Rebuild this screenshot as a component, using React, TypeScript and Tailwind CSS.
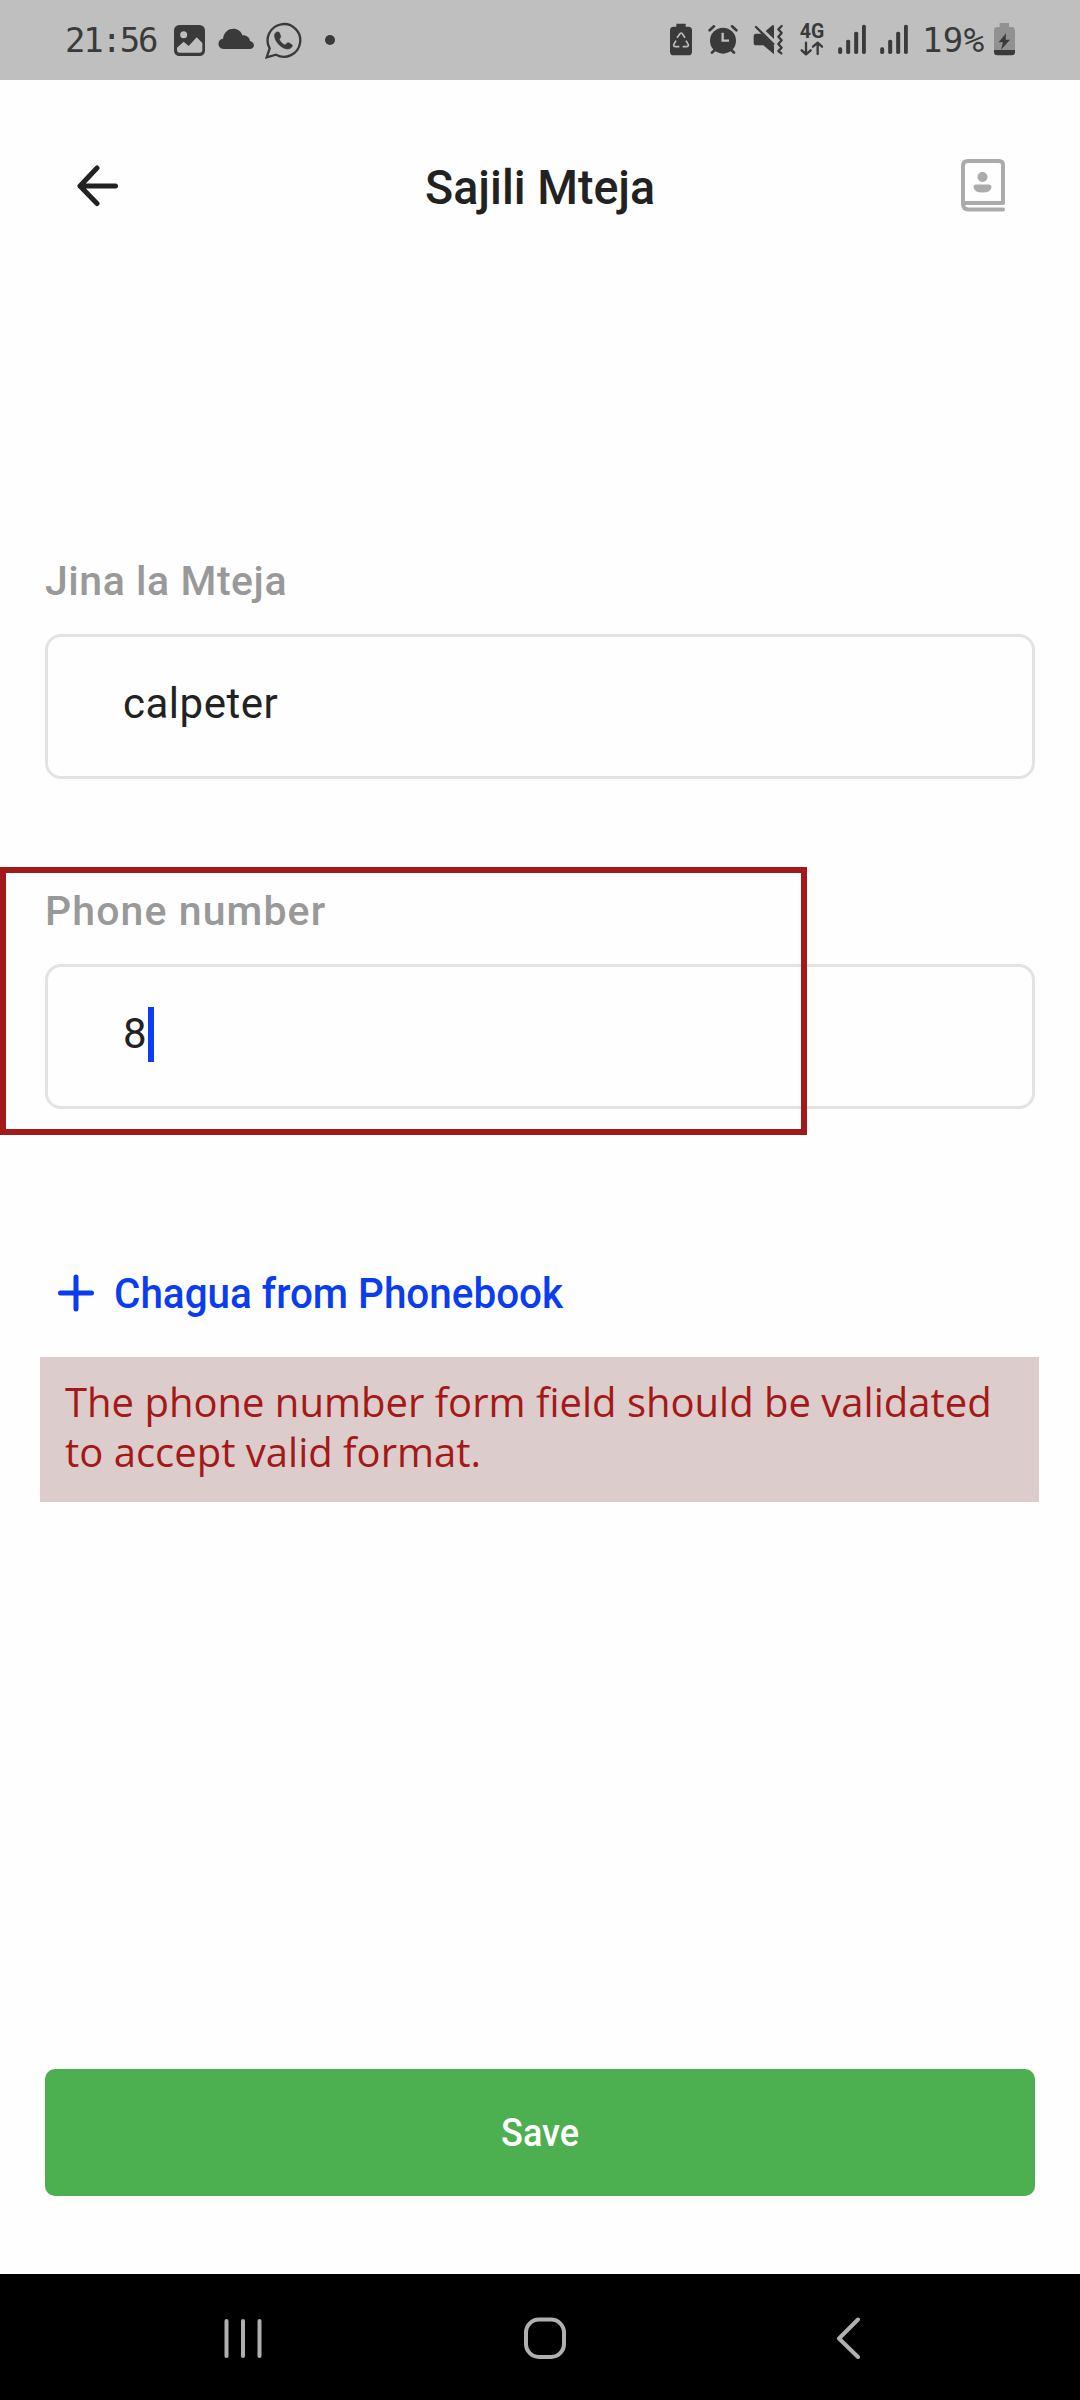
import type { ReactNode } from 'react';

const INK = '#3a3a3a';
const BAR = '#bfbfbf';

function Signal({ className }: { className: string }) {
  return (
    <svg viewBox="0 0 84 93" className={className} fill={INK}>
      <rect x="0.5" y="70" width="12" height="20" rx="5" />
      <rect x="24.5" y="47" width="12" height="43" rx="5" />
      <rect x="48.5" y="23" width="12" height="67" rx="5" />
      <rect x="72" y="2" width="11.5" height="88" rx="5" />
    </svg>
  );
}

function StatusBar() {
  return (
    <header className="flex h-20 items-start bg-[#bfbfbf] font-['DejaVu_Sans_Mono',monospace] text-[34px] leading-10 text-[#3a3a3a]">
      <span className="mt-5 ml-[65px] w-[109px] tracking-[-2.2px]">21:56</span>
      <svg viewBox="402 75 93 93" className="mt-[25px] h-[31px] w-[31px]">
        <rect x="402" y="75" width="93" height="93" rx="16" fill={INK} />
        <circle cx="431" cy="104" r="10.5" fill={BAR} />
        <path d="M411 143 431 125 446 138 470 112 487 129V151Q487 158 480 158H418Q411 158 411 151Z" fill={BAR} />
      </svg>
      <svg viewBox="534 84 111 66" className="mt-7 ml-[13px] h-[22px] w-[37px]">
        <path d="M551 147C531 147 530 118 549 116C554 79 599 78 607 106C620 105 629 113 630 123C647 127 645 147 629 147Z" fill={INK} />
      </svg>
      <svg viewBox="675 66 111 111" className="mt-[22px] ml-2.5 h-[37px] w-[37px]">
        <path d="M689 145A49 49 0 1 1 708 164L680 172Z" fill="none" stroke={INK} strokeWidth="7" />
        <path d="M712 96C706 96 703 103 704 110C707 129 727 146 743 147C750 147 757 142 757 136C757 134 747 128 744 128C740 128 738 135 735 135C730 134 720 124 718 119C718 115 723 113 722 109C720 103 718 97 716 96Z" fill={INK} stroke={INK} strokeWidth="2" />
      </svg>
      <span className="mt-[35px] ml-[23px] size-2.5 rounded-full bg-[#3a3a3a]" />

      <div className="ml-auto flex items-start pr-[65px]">
        <svg viewBox="60 69 69 99" className="mt-[23px] h-[33px] w-[23px]">
          <path d="M79 71H107V80H115Q126 80 126 91V155Q126 166 115 166H71Q60 166 60 155V91Q60 80 71 80H79Z" fill={INK} />
          <g fill="none" stroke={BAR} strokeWidth="5">
            <path d="M81 113 91 100Q93 98 96 100L105 113" />
            <path d="M78 122 71 134Q70 140 77 140H88" />
            <path d="M108 122 115 134Q116 140 109 140H98" />
          </g>
        </svg>
        <svg viewBox="176 72 90 93" className="mt-6 ml-[15px] h-[31px] w-[30px]">
          <circle cx="221" cy="122" r="39" fill={INK} />
          <path d="M181 91 194 79M261 91 248 79M188 158 196 150M254 158 246 150" stroke={INK} strokeWidth="8" strokeLinecap="round" />
          <path d="M220 98V122H239" fill="none" stroke={BAR} strokeWidth="7" />
        </svg>
        <svg viewBox="311 72 93 93" className="mt-6 ml-[15px] h-[31px] w-[31px]">
          <path d="M313 109Q313 101 320 101H337L374 137V163L342 136H321Q313 136 313 128ZM349 93 369 76Q374 73 374 80V117Z" fill={INK} />
          <path d="M320 81 372 132" stroke={INK} strokeWidth="7" strokeLinecap="round" />
          <path d="M397 78 387 88 397 99 387 110 397 121 387 132 397 143 387 153 396 160" fill="none" stroke={INK} strokeWidth="7" strokeLinecap="round" strokeLinejoin="round" />
        </svg>
        <div className="mt-[23px] ml-4 flex w-6 flex-col items-center">
          <span className="font-['Roboto',sans-serif] text-[19.5px] leading-[18px] font-bold">4G</span>
          <svg viewBox="452 123 72 45" className="h-[15px] w-6" fill="none" stroke={INK} strokeWidth="7" strokeLinecap="round" strokeLinejoin="round">
            <path d="M470 128V162M457 151 470 163 484 151M505 162V129M491 140 505 128 518 140" />
          </svg>
        </div>
        <Signal className="mt-6 ml-[14px] h-[31px] w-7" />
        <Signal className="mt-6 ml-[14px] h-[31px] w-7" />
        <span className="mt-5 ml-[14px] w-[72px] text-[34px] tracking-[0.4px] whitespace-nowrap">19%</span>
        <svg viewBox="1032 69 63 99" className="mt-[23px] h-[33px] w-[21px]">
          <path d="M1049 69H1077V81H1085Q1095 81 1095 92V150H1032V92Q1032 81 1042 81H1049Z" fill="#919191" />
          <path d="M1032 150H1095V156Q1095 166 1085 166H1042Q1032 166 1032 156Z" fill={INK} />
          <path d="M1068 100 1046 127H1059L1053 149 1080 119H1067Z" fill={INK} />
        </svg>
      </div>
    </header>
  );
}

function Field({ label, labelClass, children }: { label: string; labelClass: string; children: ReactNode }) {
  return (
    <div className="mx-[45px]">
      <div className={`mb-[29px] h-12 text-[41px] leading-[48px] font-medium text-[#999] ${labelClass}`}>{label}</div>
      <div className="flex h-[145px] items-start rounded-2xl border-[3px] border-[#e3e3e3] pt-[42px] pl-[75px] text-[42px] leading-[50px] text-[#222]">
        {children}
      </div>
    </div>
  );
}

export default function App() {
  return (
    <div className="flex h-[2400px] w-[1080px] flex-col overflow-hidden bg-[#fefefe] font-['Roboto',sans-serif]">
      <StatusBar />

      <div className="flex h-[212px] items-center justify-between pr-[75px] pl-[77px] text-[#222]">
        <svg viewBox="0 0 42 42" className="h-[42px] w-[42px]" fill="none" stroke="currentColor" strokeWidth="5" strokeLinecap="round" strokeLinejoin="round">
          <path d="M20 3 3 21 20 38.5M3 21H38.5" />
        </svg>
        <h1 className="scale-x-95 pt-[3px] text-[49px] leading-[60px] font-medium">Sajili Mteja</h1>
        <svg viewBox="0 0 44 54" className="mb-0.5 h-[54px] w-11" fill="none" stroke="#ababab" strokeWidth="4" strokeLinecap="round">
          <path d="M42 45V7Q42 3 38 3H7Q2 3 2 8V46Q2 51.5 8 51.5H42M3 45H42" />
          <circle cx="21.5" cy="19" r="5" fill="#ababab" stroke="none" />
          <path d="M15 26.5H28Q30.500 26.5 30.5 29Q30 34.500 21.5 34.5T12.5 29Q12.5 26.5 15 26.5Z" fill="#ababab" stroke="none" />
        </svg>
      </div>

      <main className="flex flex-1 flex-col pt-[265px]">
        <Field label="Jina la Mteja" labelClass="tracking-[0.55px]">
          <span className="tracking-[0.5px]">calpeter</span>
        </Field>

        <div className="relative mt-[108px]">
          <Field label="Phone number" labelClass="tracking-[1.1px]">
            <span className="w-[25px]">8</span>
            <span className="-mt-0.5 h-[55px] w-[5.5px] bg-[#0a3df5]" />
          </Field>
          <div className="absolute -top-5 left-0 h-[268px] w-[807px] border-6 border-[#a31818]" />
        </div>

        <div className="mt-[159px] ml-[58px] flex h-[50px] items-center text-[#0a3df0]">
          <svg viewBox="0 0 36 38" className="mb-px h-[38px] w-9" fill="none" stroke="currentColor" strokeWidth="5" strokeLinecap="round">
            <path d="M18 3V35M2.5 19H33.5" />
          </svg>
          <span className="ml-5 origin-left scale-x-94 text-[43px] leading-[50px] font-medium">Chagua from Phonebook</span>
        </div>

        <p className="mt-[39px] ml-10 h-[145px] w-[999px] bg-[#dccccc] pt-5 pl-[25px] font-['Open_Sans',sans-serif] text-[40px] leading-[50px] text-[#a51818]">
          The phone number form field should be validated
          <br />
          to accept valid format.
        </p>

        <button className="mx-[45px] mt-[567px] h-[127px] rounded-[10px] bg-[#4caf50] text-[38px] leading-[50px] font-medium text-white">
          <span className="inline-block scale-x-95">Save</span>
        </button>
      </main>

      <nav className="flex h-[126px] items-center bg-black pt-0.5 pl-[224px]">
        <svg viewBox="0 0 38 42" className="h-[42px] w-[38px]" stroke="#b0b0b0" strokeWidth="4" strokeLinecap="round">
          <path d="M2.5 4V39M19 4V39M35.5 4V39" />
        </svg>
        <svg viewBox="0 0 42 42" className="ml-[262px] h-[42px] w-[42px]" fill="none" stroke="#b0b0b0" strokeWidth="4">
          <rect x="2" y="2.5" width="38" height="37.5" rx="13" />
        </svg>
        <svg viewBox="0 0 25 42" className="ml-[270px] h-[42px] w-[25px]" fill="none" stroke="#b0b0b0" strokeWidth="4" strokeLinecap="round" strokeLinejoin="round">
          <path d="M22 2.5 3 21.5 22 40" />
        </svg>
      </nav>
    </div>
  );
}
